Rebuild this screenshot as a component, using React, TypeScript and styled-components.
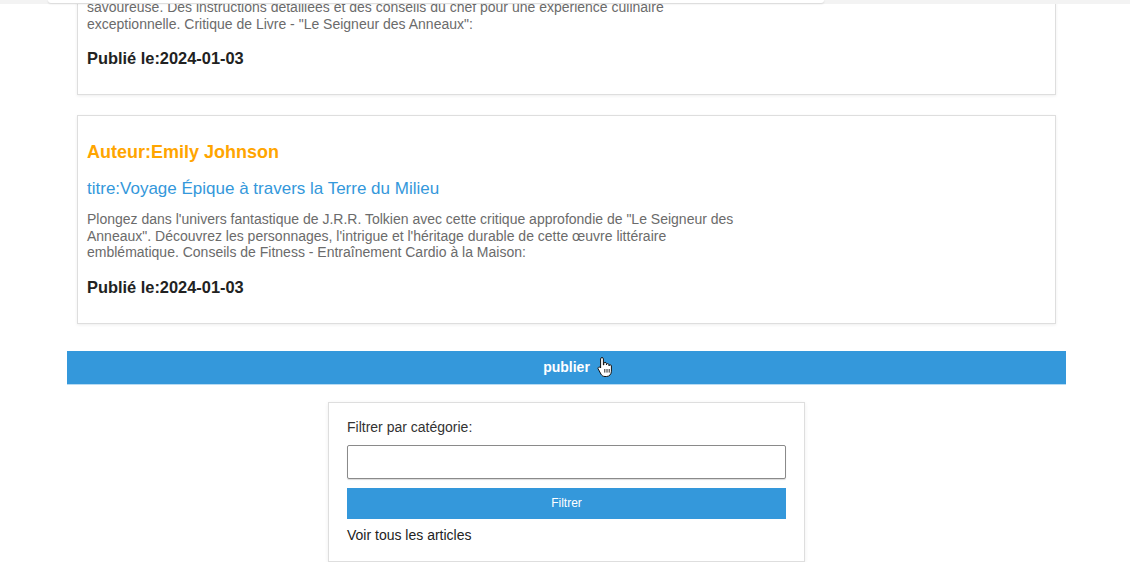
import React from 'react';

import styled, { createGlobalStyle } from 'styled-components';

const GlobalStyle = createGlobalStyle`
  html, body {
    margin: 0;
    padding: 0;
    background: #fff;
    font-family: 'Liberation Sans', Arial, sans-serif;
  }
`;

const TopStripStyled = styled.div`
  height: 4px;
  background: #f3f3f3;
  position: relative;
  z-index: 1;
`;

const TopTabStyled = styled.div`
  margin-left: 48px;
  width: 776px;
  height: 3px;
  background: #fff;
  border-radius: 0 0 6px 6px;
  box-shadow: 0 1px 2px rgba(0, 0, 0, 0.12);
`;

const ContainerStyled = styled.main`
  width: 999px;
  margin-left: calc(50% - 498px);
`;

const ArticleStyled = styled.article<{ $cut?: boolean }>`
  margin: ${(p) => (p.$cut ? '-5px' : '20px')} 10px 0;
  padding: ${(p) => (p.$cut ? '0' : '10px')} 10px 10px 9px;
  border: solid 1px #dedede;
  border-top: ${(p) => (p.$cut ? 'none' : 'solid 1px #dedede')};
  box-shadow: 0 1px 3px rgba(0, 0, 0, 0.07);
  background: #fff;
`;

const AuthorStyled = styled.h3`
  margin: 15px 0 0;
  font-size: 18px;
  line-height: 22px;
  font-weight: bold;
  color: #ffa500;
`;

const TitleStyled = styled.h4`
  margin: 16px 0 0;
  font-size: 17px;
  line-height: 20px;
  font-weight: normal;
  color: #3498db;
`;

const DescriptionStyled = styled.p<{ $cut?: boolean }>`
  margin: ${(p) => (p.$cut ? '0' : '12px')} 0 0;
  max-width: 670px;
  font-size: 14px;
  line-height: 16.5px;
  color: #6b6b6b;
`;

const DateStyled = styled.p`
  margin: 17px 0 16px;
  font-size: 16.4px;
  line-height: 19px;
  font-weight: bold;
  color: #222;
`;

const PublishStyled = styled.button`
  position: relative;
  display: block;
  width: 999px;
  height: 34px;
  margin: 27px 0 0;
  border: none;
  border-bottom: solid 1px #b7dbf3;
  background: #3498db;
  color: #fff;
  font-family: 'Liberation Sans', Arial, sans-serif;
  font-size: 14px;
  font-weight: bold;
  cursor: pointer;
`;

const CursorStyled = styled.svg`
  position: absolute;
  left: 530px;
  top: 5px;
`;

const FilterBoxStyled = styled.form`
  width: 439px;
  margin: 17px 0 0 261px;
  padding: 16px 18px 18px;
  border: solid 1px #dedede;
  box-shadow: 0 1px 4px rgba(0, 0, 0, 0.07);
  display: flex;
  flex-direction: column;
`;

const LabelStyled = styled.label`
  font-size: 14px;
  line-height: 16px;
  color: #333;
`;

const InputStyled = styled.input`
  box-sizing: border-box;
  width: 100%;
  height: 34px;
  margin-top: 10px;
  border: solid 1px #8a8a8a;
  border-radius: 2px;
  box-shadow: 0 1px 1px rgba(0, 0, 0, 0.15);
`;

const FilterButtonStyled = styled.button`
  height: 31px;
  margin-top: 9px;
  border: none;
  background: #3498db;
  color: #fff;
  font-family: 'Liberation Sans', Arial, sans-serif;
  font-size: 12px;
`;

const AllLinkStyled = styled.a`
  margin-top: 8px;
  font-size: 14px;
  line-height: 16px;
  color: #222;
  text-decoration: none;
`;

const HandCursor = () => (
  <CursorStyled width='16' height='22' viewBox='0 0 16 22'>
    <path
      d='M5 1.5c.8 0 1.4.6 1.4 1.4V9l.4-.1V7.6c0-.8.6-1.3 1.3-1.3s1.3.6 1.3 1.3v1.2c0-.7.6-1.2 1.3-1.2s1.3.5 1.3 1.2v1c.1-.6.6-1 1.2-1 .7 0 1.2.5 1.2 1.2v5.2c0 2.9-1.9 5.3-4.9 5.3H8c-2 0-3-.8-4-2.3L1.2 13c-.4-.6-.2-1.3.3-1.7.6-.4 1.3-.3 1.7.2l.4.5V2.9c0-.8.6-1.4 1.4-1.4z'
      fill='#fff'
      stroke='#111'
      strokeWidth='1'
      strokeLinejoin='round'
    />
    <path d='M7.8 13v3.6M10 13v3.6M12.2 13v3.6' stroke='#111' strokeWidth='0.9' />
  </CursorStyled>
);

const App: React.FC = () => (
  <>
    <GlobalStyle />
    <TopStripStyled>
      <TopTabStyled />
    </TopStripStyled>
    <ContainerStyled>
      <ArticleStyled $cut>
        <DescriptionStyled $cut>
          savoureuse. Des instructions détaillées et des conseils du chef pour une expérience culinaire
          exceptionnelle. Critique de Livre - "Le Seigneur des Anneaux":
        </DescriptionStyled>
        <DateStyled>Publié le:2024-01-03</DateStyled>
      </ArticleStyled>
      <ArticleStyled>
        <AuthorStyled>Auteur:Emily Johnson</AuthorStyled>
        <TitleStyled>titre:Voyage Épique à travers la Terre du Milieu</TitleStyled>
        <DescriptionStyled>
          Plongez dans l'univers fantastique de J.R.R. Tolkien avec cette critique approfondie de "Le Seigneur des
          Anneaux". Découvrez les personnages, l'intrigue et l'héritage durable de cette œuvre littéraire
          emblématique. Conseils de Fitness - Entraînement Cardio à la Maison:
        </DescriptionStyled>
        <DateStyled>Publié le:2024-01-03</DateStyled>
      </ArticleStyled>
      <PublishStyled type='button'>
        publier
        <HandCursor />
      </PublishStyled>
      <FilterBoxStyled onSubmit={(e) => e.preventDefault()}>
        <LabelStyled htmlFor='categorie'>Filtrer par catégorie:</LabelStyled>
        <InputStyled id='categorie' type='text' />
        <FilterButtonStyled type='submit'>Filtrer</FilterButtonStyled>
        <AllLinkStyled href='#'>Voir tous les articles</AllLinkStyled>
      </FilterBoxStyled>
    </ContainerStyled>
  </>
);

export default App;
